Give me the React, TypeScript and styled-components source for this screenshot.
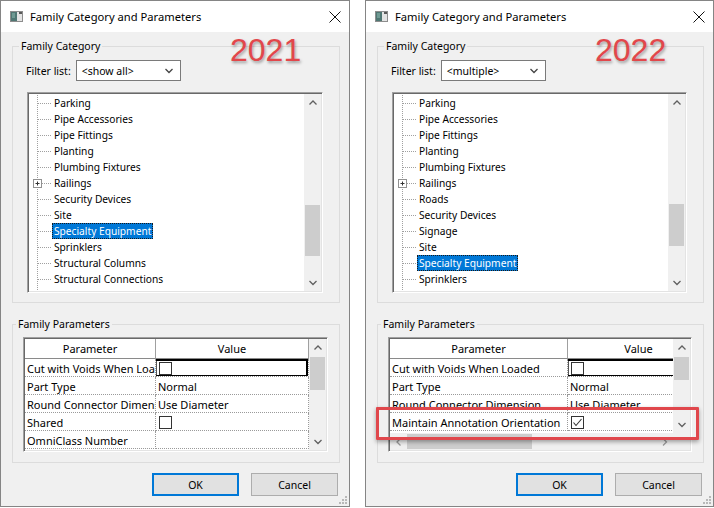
import React from 'react';
import styled, { createGlobalStyle } from 'styled-components';

const UI_FONT = '"Noto Sans", "Liberation Sans", sans-serif';

const GlobalStyle = createGlobalStyle`
  body {
    margin: 0;
    background: #fff;
    font-family: ${UI_FONT};
  }
  * { box-sizing: border-box; }
`;

type TreeItem = { label: string; expandable?: boolean; selected?: boolean };
type ParamRow = { name: string; value?: string; check?: 'off' | 'on'; focused?: boolean };

type DialogProps = {
    width: number;
    year: string;
    filter: string;
    items: TreeItem[];
    listThumb: [number, number];
    columns: string;
    rows: ParamRow[];
    tableThumb: [number, number];
    hThumb?: [number, number];
    highlight?: boolean;
};

const Chevron = ({ dir, color = '#606060' }: { dir: 'up' | 'down' | 'left' | 'right'; color?: string }) => {
    const pts = {
        up: '0.5,4.5 4,1 7.5,4.5',
        down: '0.5,1 4,4.5 7.5,1',
        left: '4.5,0.5 1,4 4.5,7.5',
        right: '1,0.5 4.5,4 1,7.5',
    }[dir];
    const vertical = dir === 'up' || dir === 'down';
    return (
        <svg width={vertical ? 8 : 6} height={vertical ? 6 : 8} viewBox={vertical ? '0 0 8 6' : '0 0 6 8'}>
            <polyline points={pts} fill="none" stroke={color} strokeWidth="1.3" />
        </svg>
    );
};

const ScrollBar = ({ horizontal, start, size, arrowColor }: { horizontal?: boolean; start: number; size: number; arrowColor?: string }) => (
    <Bar $horizontal={horizontal}>
        <Arrow><Chevron dir={horizontal ? 'left' : 'up'} color={arrowColor} /></Arrow>
        <Track $horizontal={horizontal}>
            <Thumb $horizontal={horizontal} $start={start} $size={size} />
        </Track>
        <Arrow><Chevron dir={horizontal ? 'right' : 'down'} color={arrowColor} /></Arrow>
    </Bar>
);

const TreeGuide = ({ expandable }: { expandable?: boolean }) => (
    <svg width="23" height="16" viewBox="0 0 23 16">
        <line x1="8.5" y1="0" x2="8.5" y2="16" stroke="#a0a0a0" strokeDasharray="1 1" />
        <line x1={expandable ? 13 : 9} y1="8.5" x2="23" y2="8.5" stroke="#a0a0a0" strokeDasharray="1 1" />
        {expandable && (
            <g>
                <rect x="4.5" y="4.5" width="8" height="8" fill="#fff" stroke="#919191" />
                <line x1="6.5" y1="8.5" x2="10.5" y2="8.5" stroke="#333" />
                <line x1="8.5" y1="6.5" x2="8.5" y2="10.5" stroke="#333" />
            </g>
        )}
    </svg>
);

const CheckBox = ({ checked }: { checked?: boolean }) => (
    <Box>
        {checked && (
            <svg width="11" height="11" viewBox="0 0 11 11">
                <polyline points="1.5,5.5 4,8.5 9.5,2" fill="none" stroke="#333" strokeWidth="1.1" />
            </svg>
        )}
    </Box>
);

const AppIcon = () => (
    <svg width="13" height="11" viewBox="0 0 13 11">
        <rect x="0.5" y="0.5" width="12" height="10" fill="#e4e4e4" stroke="#8d8d8d" />
        <rect x="1" y="1" width="6" height="9" fill="#4f7773" />
        <rect x="2" y="2" width="3" height="5" fill="#6f9a93" />
        <rect x="9" y="1" width="3" height="2" fill="#5a5a5a" />
    </svg>
);

const CloseIcon = () => (
    <svg width="12" height="12" viewBox="0 0 12 12">
        <path d="M0.5 0.5 L11.5 11.5 M11.5 0.5 L0.5 11.5" stroke="#111" strokeWidth="1" />
    </svg>
);

const Grip = () => (
    <svg width="10" height="10" viewBox="0 0 10 10">
        {[[7, 1], [4, 4], [7, 4], [1, 7], [4, 7], [7, 7]].map(([x, y]) => (
            <rect key={`${x}-${y}`} x={x} y={y} width="2" height="2" fill="#b8b8b8" />
        ))}
    </svg>
);

const Dialog = ({ width, year, filter, items, listThumb, columns, rows, tableThumb, hThumb, highlight }: DialogProps) => (
    <Window $width={width}>
        <TitleBar>
            <AppIcon />
            <Title>Family Category and Parameters</Title>
            <CloseIcon />
        </TitleBar>
        <Body>
            <Group>
                <Legend>Family Category</Legend>
                <FilterRow>
                    <span>Filter list:</span>
                    <Select>
                        <span>{filter}</span>
                        <Chevron dir="down" color="#444" />
                    </Select>
                </FilterRow>
                <ListBox>
                    <Tree>
                        {items.map(item => (
                            <TreeRow key={item.label}>
                                <TreeGuide expandable={item.expandable} />
                                <TreeLabel $selected={item.selected}>{item.label}</TreeLabel>
                            </TreeRow>
                        ))}
                    </Tree>
                    <ScrollBar start={listThumb[0]} size={listThumb[1]} />
                </ListBox>
            </Group>
            <Group $params>
                <Legend>Family Parameters</Legend>
                <Table $hscroll={!!hThumb}>
                    <Grid $columns={columns}>
                        <HeadCell>Parameter</HeadCell>
                        <HeadCell>Value</HeadCell>
                        {rows.map(row => (
                            <React.Fragment key={row.name}>
                                <Cell>{row.name}</Cell>
                                <Cell $focused={row.focused}>
                                    {row.check ? <CheckBox checked={row.check === 'on'} /> : row.value}
                                </Cell>
                            </React.Fragment>
                        ))}
                    </Grid>
                    <ScrollBar start={tableThumb[0]} size={tableThumb[1]} />
                    {hThumb && (
                        <>
                            <ScrollBar horizontal start={hThumb[0]} size={hThumb[1]} arrowColor="#9a9a9a" />
                            <Corner />
                        </>
                    )}
                </Table>
            </Group>
            <Buttons>
                <Button $default>OK</Button>
                <Button>Cancel</Button>
            </Buttons>
        </Body>
        <Year>{year}</Year>
        {highlight && <Highlight />}
        <GripSpot><Grip /></GripSpot>
    </Window>
);

const leftItems: TreeItem[] = [
    { label: 'Parking' },
    { label: 'Pipe Accessories' },
    { label: 'Pipe Fittings' },
    { label: 'Planting' },
    { label: 'Plumbing Fixtures' },
    { label: 'Railings', expandable: true },
    { label: 'Security Devices' },
    { label: 'Site' },
    { label: 'Specialty Equipment', selected: true },
    { label: 'Sprinklers' },
    { label: 'Structural Columns' },
    { label: 'Structural Connections' },
    { label: 'Structural Foundations' },
];

const rightItems: TreeItem[] = [
    { label: 'Parking' },
    { label: 'Pipe Accessories' },
    { label: 'Pipe Fittings' },
    { label: 'Planting' },
    { label: 'Plumbing Fixtures' },
    { label: 'Railings', expandable: true },
    { label: 'Roads' },
    { label: 'Security Devices' },
    { label: 'Signage' },
    { label: 'Site' },
    { label: 'Specialty Equipment', selected: true },
    { label: 'Sprinklers' },
    { label: 'Structural Columns' },
];

const leftRows: ParamRow[] = [
    { name: 'Cut with Voids When Loaded', check: 'off', focused: true },
    { name: 'Part Type', value: 'Normal' },
    { name: 'Round Connector Dimension', value: 'Use Diameter' },
    { name: 'Shared', check: 'off' },
    { name: 'OmniClass Number', value: '' },
];

const rightRows: ParamRow[] = [
    { name: 'Cut with Voids When Loaded', check: 'off', focused: true },
    { name: 'Part Type', value: 'Normal' },
    { name: 'Round Connector Dimension', value: 'Use Diameter' },
    { name: 'Maintain Annotation Orientation', check: 'on' },
];

const App = () => (
    <>
        <GlobalStyle />
        <Page>
            <Dialog
                width={350}
                year="2021"
                filter="<show all>"
                items={leftItems}
                listThumb={[94, 51]}
                columns="131px 153px"
                rows={leftRows}
                tableThumb={[1, 33]}
            />
            <Dialog
                width={349}
                year="2022"
                filter="<multiple>"
                items={rightItems}
                listThumb={[93, 42]}
                columns="178px 142px"
                rows={rightRows}
                tableThumb={[1, 23]}
                hThumb={[0, 125]}
                highlight
            />
        </Page>
    </>
);

const Page = styled.div`
    display: flex;
    gap: 15px;
    width: 714px;
    height: 508px;
    background: #fff;
`;

const Window = styled.div<{ $width: number }>`
    position: relative;
    width: ${p => p.$width}px;
    height: 507px;
    border: 1px solid #858585;
    background: #f0f0f0;
    display: flex;
    flex-direction: column;
    font-size: 10.5px;
    color: #000;
`;

const TitleBar = styled.div`
    flex: none;
    height: 31px;
    background: #fff;
    display: flex;
    align-items: center;
    gap: 7px;
    padding: 0 8px 0 9px;
    font-size: 11.2px;
`;

const Title = styled.div`
    flex: 1;
`;

const Body = styled.div`
    flex: 1;
    display: flex;
    flex-direction: column;
    padding: 6px 9px 0 11px;
`;

const Group = styled.fieldset<{ $params?: boolean }>`
    margin: ${p => p.$params ? '13px 0 0' : '0'};
    min-width: 0;
    border: 1px solid #dcdcdc;
    padding: ${p => p.$params ? '5px 11px 10px 10px' : '6px 16px 9px 13px'};
`;

const Legend = styled.legend`
    padding: 0 2px;
    margin-left: -7px;
    line-height: 16px;
`;

const FilterRow = styled.div`
    display: flex;
    align-items: center;
    gap: 5px;
    height: 21px;
`;

const Select = styled.div`
    width: 105px;
    height: 21px;
    border: 1px solid #7a7a7a;
    background: #fff;
    display: flex;
    align-items: center;
    justify-content: space-between;
    padding: 0 7px 0 5px;
`;

const sunken = `
    border: 1px solid;
    border-color: #a0a0a0 #fff #fff #a0a0a0;
    box-shadow: inset 1px 1px #696969, inset -1px -1px #e3e3e3;
    padding: 1px;
    background: #fff;
`;

const ListBox = styled.div`
    ${sunken}
    margin: 11px 0 0 1px;
    height: 201px;
    display: flex;
`;

const Tree = styled.div`
    flex: 1;
    overflow: hidden;
    padding-top: 1px;
`;

const TreeRow = styled.div`
    display: flex;
    align-items: center;
    height: 16px;
`;

const TreeLabel = styled.span<{ $selected?: boolean }>`
    padding: 0 2px;
    font-size: 10.2px;
    line-height: 16px;
    white-space: nowrap;
    background: ${p => p.$selected ? '#0078d7' : 'transparent'};
    color: ${p => p.$selected ? '#fff' : '#000'};
    outline: ${p => p.$selected ? '1px dotted #1a1a1a' : 'none'};
    outline-offset: -1px;
`;

const Bar = styled.div<{ $horizontal?: boolean }>`
    flex: none;
    display: flex;
    flex-direction: ${p => p.$horizontal ? 'row' : 'column'};
    ${p => p.$horizontal ? 'height: 17px;' : 'width: 17px;'}
    background: #f0f0f0;
`;

const Arrow = styled.div`
    flex: none;
    width: 17px;
    height: 17px;
    display: flex;
    align-items: center;
    justify-content: center;
`;

const Track = styled.div<{ $horizontal?: boolean }>`
    flex: 1;
    display: flex;
    flex-direction: ${p => p.$horizontal ? 'row' : 'column'};
    padding: ${p => p.$horizontal ? '1px 0' : '0 1px'};
`;

const Thumb = styled.div<{ $horizontal?: boolean; $start: number; $size: number }>`
    flex: none;
    background: #cdcdcd;
    ${p => p.$horizontal
        ? `margin-left: ${p.$start}px; width: ${p.$size}px;`
        : `margin-top: ${p.$start}px; height: ${p.$size}px;`}
`;

const Table = styled.div<{ $hscroll?: boolean }>`
    ${sunken}
    height: 115px;
    display: grid;
    grid-template-columns: 1fr 17px;
    grid-template-rows: ${p => p.$hscroll ? '1fr 17px' : '1fr'};
    font-size: 11px;
`;

const Grid = styled.div<{ $columns: string }>`
    overflow: hidden;
    display: grid;
    grid-template-columns: ${p => p.$columns};
    grid-template-rows: 20px;
    grid-auto-rows: 18px;
    align-content: start;
`;

const HeadCell = styled.div`
    display: flex;
    align-items: center;
    justify-content: center;
    border-right: 1px solid #a0a0a0;
    border-bottom: 1px solid #8a8a8a;
    white-space: nowrap;
`;

const Cell = styled.div<{ $focused?: boolean }>`
    display: flex;
    align-items: center;
    padding: 1px 0 0 2px;
    white-space: nowrap;
    overflow: hidden;
    border-right: 1px dotted #9a9a9a;
    border-bottom: 1px dotted #9a9a9a;
    box-shadow: ${p => p.$focused ? 'inset 0 2px 0 #000, inset -2px 0 0 #000, inset 0 -1px 0 #000, inset 1px 0 0 #555' : 'none'};
`;

const Box = styled.span`
    width: 13px;
    height: 13px;
    margin-left: 1px;
    border: 1px solid #333;
    background: #fff;
    display: flex;
    align-items: center;
    justify-content: center;
`;

const Corner = styled.div`
    background: #f0f0f0;
`;

const Buttons = styled.div`
    display: flex;
    justify-content: flex-end;
    gap: 12px;
    margin-top: 10px;
    padding-right: 2px;
`;

const Button = styled.div<{ $default?: boolean }>`
    width: 87px;
    height: 23px;
    display: flex;
    align-items: center;
    justify-content: center;
    background: #e1e1e1;
    border: 1px solid ${p => p.$default ? '#0078d7' : '#adadad'};
    box-shadow: ${p => p.$default ? 'inset 0 0 0 1px #0078d7' : 'none'};
`;

const Year = styled.div`
    position: absolute;
    left: 229px;
    top: 31px;
    font-family: "Liberation Sans", Arial, sans-serif;
    font-size: 32px;
    line-height: 36px;
    color: #e2474b;
    text-shadow: 1px 2px 3px rgba(0, 0, 0, 0.35);
`;

const Highlight = styled.div`
    position: absolute;
    left: 10px;
    top: 406px;
    width: 323px;
    height: 33px;
    border: 3px solid #e0474c;
    border-radius: 1px;
    box-shadow: 0 2px 4px rgba(0, 0, 0, 0.35);
`;

const GripSpot = styled.div`
    position: absolute;
    right: 1px;
    bottom: 1px;
    display: flex;
`;

export default App;
